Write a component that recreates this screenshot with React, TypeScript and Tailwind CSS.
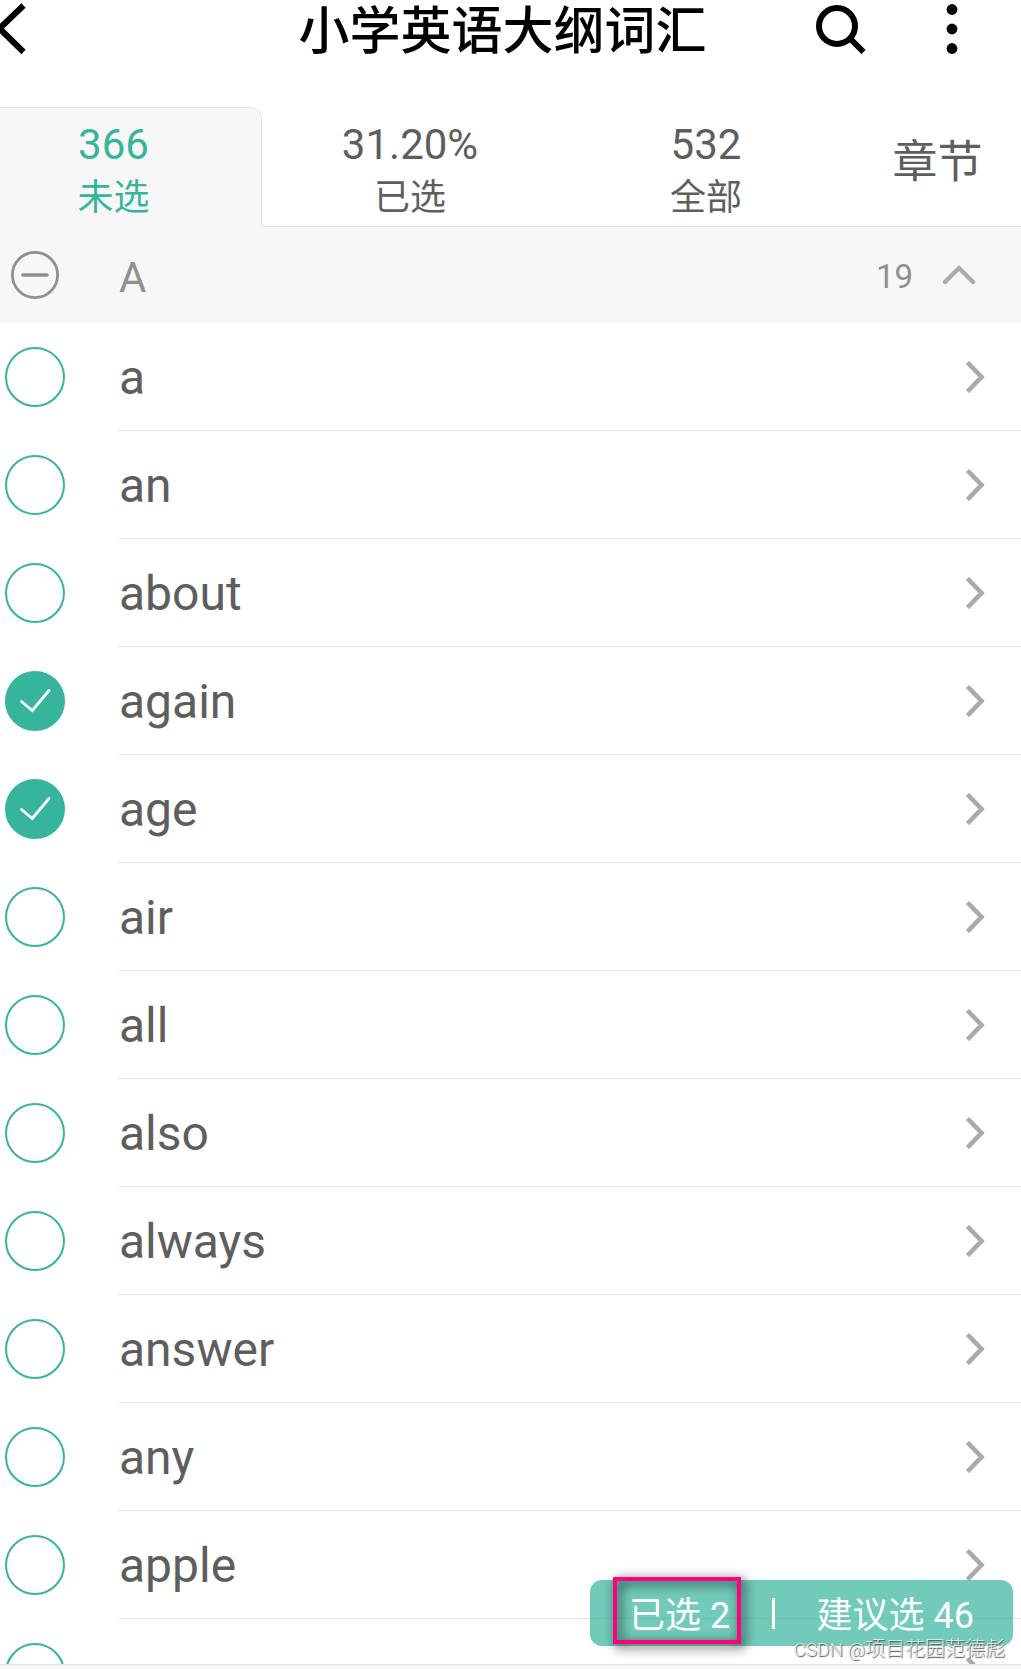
import clsx from 'clsx'
import { useState } from 'react'

interface Tab {
  id: string
  value: string
  label: string
}

const TABS: Tab[] = [
  { id: 'unselected', value: '366', label: '未选' },
  { id: 'selected', value: '31.20%', label: '已选' },
  { id: 'all', value: '532', label: '全部' },
]

const WORDS = [
  'a',
  'an',
  'about',
  'again',
  'age',
  'air',
  'all',
  'also',
  'always',
  'answer',
  'any',
  'apple',
  '',
]

function Header() {
  return (
    <header className="grid h-[107px] shrink-0 grid-cols-[1fr_auto_1fr] items-start pr-4">
      <button aria-label="返回" className="h-[58px] w-10" type="button">
        <svg className="h-[58px] w-10" fill="none" viewBox="0 0 40 58">
          <path d="M23.5 5.5 L-0.5 28.5 L23.5 52" stroke="#000" strokeWidth="6" />
        </svg>
      </button>
      <h1 className="pt-[3px] text-[51px] font-medium leading-[58px] text-black">小学英语大纲词汇</h1>
      <div className="flex justify-end gap-[72px] pr-[39px]">
        <button aria-label="搜索" type="button">
          <svg className="h-[58px] w-[50px]" fill="none" stroke="#000" strokeWidth="6" viewBox="0 0 50 58">
            <circle cx="21" cy="26" r="18" />
            <path d="M34 38.5 L47.5 52" />
          </svg>
        </button>
        <button aria-label="更多" type="button">
          <svg className="h-[58px] w-7" fill="#000" viewBox="0 0 28 58">
            <circle cx="14" cy="9.5" r="5.4" />
            <circle cx="14" cy="29" r="5.4" />
            <circle cx="14" cy="48.5" r="5.4" />
          </svg>
        </button>
      </div>
    </header>
  )
}

interface TabBarProps {
  active: string
  onChange: (id: string) => void
}

function TabBar({ active, onChange }: TabBarProps) {
  return (
    <nav className="grid h-[120px] shrink-0 grid-cols-[262fr_296fr_296fr_167fr]">
      {TABS.map((tab, index) => (
        <button
          key={tab.id}
          aria-pressed={active === tab.id}
          className={clsx(
            'flex flex-col items-center border-[#e3e3e3]',
            index === 0 && 'pr-[34px]',
            active === tab.id
              ? 'rounded-tr-xl border-t border-r bg-[#f7f7f7] pt-[5px] text-[#36b59c]'
              : 'border-b pt-1.5 text-[#5e5e5e]',
          )}
          type="button"
          onClick={() => onChange(tab.id)}
        >
          <span className="text-[42px] leading-[64px]">{tab.value}</span>
          <span className="text-[36px] leading-[42px]">{tab.label}</span>
        </button>
      ))}
      <button className="border-b border-[#e3e3e3] pb-2 text-[45px] text-[#5e5e5e]" type="button">
        章节
      </button>
    </nav>
  )
}

interface WordRowProps {
  word: string
  checked: boolean
  onToggle: () => void
}

function WordRow({ word, checked, onToggle }: WordRowProps) {
  return (
    <li className="flex h-[108px] pl-[5px]">
      <label className="grid w-[114px] shrink-0 items-center">
        <input
          aria-label={word}
          checked={checked}
          className="peer col-start-1 row-start-1 h-[60px] w-[60px] appearance-none rounded-full border-2 border-[#36b59c] checked:bg-[#36b59c]"
          type="checkbox"
          onChange={onToggle}
        />
        <svg
          className="pointer-events-none invisible col-start-1 row-start-1 h-[60px] w-[60px] peer-checked:visible"
          fill="none"
          viewBox="0 0 60 60"
        >
          <path d="M16.5 30.5 L27.3 39.5 L44 19.5" stroke="#fff" strokeLinecap="round" strokeWidth="2.8" />
        </svg>
      </label>
      <button
        className="flex flex-1 items-center justify-between border-b border-[#e3e3e3] pr-9 text-left"
        type="button"
      >
        <span className="pt-0.5 text-[48px] leading-[56px] text-[#5e5e5e]">{word}</span>
        <svg className="h-8 w-5" fill="none" viewBox="0 0 20 32">
          <path d="M2.5 1.5 L16.5 16 L2.5 30.5" stroke="#aaa" strokeWidth="4.6" />
        </svg>
      </button>
    </li>
  )
}

function SectionHeader() {
  return (
    <button
      className="flex h-24 w-full shrink-0 items-center bg-[#f7f7f7] pr-11 pl-[11px] text-[#909090]"
      type="button"
    >
      <svg className="mr-[60px] h-12 w-12" fill="none" stroke="#909090" viewBox="0 0 48 48">
        <circle cx="24" cy="24" r="22.6" strokeWidth="2.8" />
        <path d="M12 24 H36" strokeLinecap="round" strokeWidth="3.6" />
      </svg>
      <span className="flex-1 pt-1 text-left text-[42px]">A</span>
      <span className="mr-7 pt-1 text-[33px]">19</span>
      <svg className="h-6 w-9" fill="none" viewBox="0 0 36 24">
        <path d="M4 19 L18 5 L32 19" stroke="#aaa" strokeLinecap="round" strokeWidth="4.4" />
      </svg>
    </button>
  )
}

export default function App() {
  const [activeTab, setActiveTab] = useState('unselected')
  const [selected, setSelected] = useState<string[]>(['again', 'age'])

  const toggleWord = (word: string) => {
    setSelected((current) =>
      current.includes(word) ? current.filter((item) => item !== word) : [...current, word],
    )
  }

  return (
    <div className="relative flex h-screen flex-col overflow-hidden bg-white font-[Roboto,'Noto_Sans_CJK_SC',sans-serif]">
      <Header />
      <TabBar active={activeTab} onChange={setActiveTab} />
      <SectionHeader />
      <ul className="min-h-0 flex-1 overflow-hidden">
        {WORDS.map((word) => (
          <WordRow
            key={word}
            checked={selected.includes(word)}
            word={word}
            onToggle={() => toggleWord(word)}
          />
        ))}
      </ul>
      <footer className="h-[5px] shrink-0 border-t border-[#e0e0e0] bg-[#f7f7f7]" />

      <div className="absolute right-2 bottom-[23px] flex h-[66px] items-center rounded-xl bg-[#36b59c]/70 pr-[39px] pl-[23px] text-[36px] text-white">
        <span className="relative flex h-[66px] w-32 items-center justify-center pt-1.5 pl-1.5">
          <span className="absolute inset-x-0 -top-[3px] h-[67px] border-4 border-[#ff0080] drop-shadow-[3px_3px_6px_rgba(0,0,0,0.9)]" />
          <span className="relative">已选 {selected.length}</span>
        </span>
        <span className="mr-[42px] ml-[31px] h-[31px] w-[3px] bg-white" />
        <span className="pt-1.5">建议选 46</span>
      </div>
      <div className="absolute right-4 bottom-1 text-[20px] leading-[30px] font-light text-[#e4e4e4] [text-shadow:1px_1px_1px_#555]">
        <span className="text-[19px]">CSDN @</span>项目花园范德彪
      </div>
    </div>
  )
}
